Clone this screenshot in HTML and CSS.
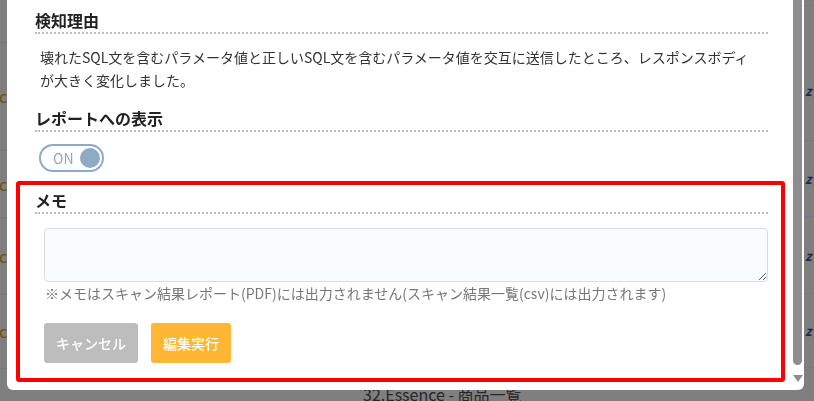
FILE: index.html
```html
<!DOCTYPE html>
<html lang="ja">
<head>
    <meta charset="UTF-8">
    <title>検知結果の編集</title>
    <link rel="stylesheet" href="styles.css">
</head>
<body>
<div id="page">
    <div class="page-left">
        <div class="row first"></div>
        <div class="row tall"><span>Spec</span></div>
        <div class="row mid"><span>Spec</span></div>
        <div class="row wide"><span>Spec</span></div>
        <div class="row short"><span>Spec</span></div>
    </div>
    <div class="page-main">
        <div class="caption">32.Essence - 商品一覧</div>
    </div>
    <div class="page-right">
        <div class="row first"></div>
        <div class="row tall"><span class="z">z</span><span class="b">)</span></div>
        <div class="row mid"><span class="z">z</span><span class="b">)</span></div>
        <div class="row wide"><span class="z">z</span><span class="b">)</span></div>
        <div class="row short"><span class="z">z</span><span class="b">)</span></div>
    </div>
</div>

<div id="modal">
    <div class="modal-body">
        <div class="section-title">検知理由</div>
        <p class="reason">壊れたSQL文を含むパラメータ値と正しいSQL文を含むパラメータ値を交互に送信したところ、レスポンスボディが大きく変化しました。</p>

        <div class="section-title second">レポートへの表示</div>
        <div class="toggle"><span class="toggle-label">ON</span><span class="toggle-knob"></span></div>

        <div class="memo">
            <div class="section-title">メモ</div>
            <div class="memo-field">
                <textarea></textarea>
                <div class="note">※メモはスキャン結果レポート(PDF)には出力されません(スキャン結果一覧(csv)には出力されます)</div>
            </div>
            <div class="actions">
                <button class="btn cancel">キャンセル</button>
                <button class="btn submit">編集実行</button>
            </div>
        </div>
    </div>
    <div class="scrollbar">
        <div class="thumb"></div>
        <div class="arrow"></div>
    </div>
</div>
</body>
</html>
```

FILE: styles.css
```css
body {
    margin: 0;
    background-color: #7f7f7f;
    font-family: "Noto Sans CJK JP", "Noto Sans", sans-serif;
    overflow: hidden;
}
#page {
    display: flex;
    height: 401px;
}
.page-left {
    width: 7px;
    overflow: hidden;
}
.page-right {
    width: 10px;
    overflow: hidden;
}
.page-main {
    flex: 1;
    padding: 382px 0 0 356px;
}
.caption {
    font-size: 16px;
    line-height: 24px;
    color: #262626;
    white-space: nowrap;
}
.row {
    display: flex;
    align-items: center;
    border-bottom: 1px solid #717886;
    white-space: nowrap;
    font-size: 15px;
}
.page-left .row {
    justify-content: flex-end;
    color: #6e4c10;
}
.page-left .first { height: 42px; }
.page-left .tall { height: 107px; }
.page-left .mid { height: 66px; }
.page-left .wide { height: 76px; }
.page-left .short { height: 73px; }
.page-right .first { height: 5px; }
.page-right .tall { height: 135px; align-items: flex-start; padding-top: 75px; box-sizing: border-box; }
.page-right .mid { height: 75px; }
.page-right .wide { height: 76px; }
.page-right .short { height: 73px; }
.page-right .z {
    color: #1c2a48;
    font-style: italic;
    font-weight: bold;
    font-size: 13px;
    margin-left: 1px;
}
.page-right .b {
    color: #7a5a20;
    font-size: 13px;
    margin-left: 1px;
}

#modal {
    position: fixed;
    left: 7px;
    top: -10px;
    width: 797px;
    height: 400px;
    background-color: #fff;
    border-radius: 6px;
    display: flex;
    overflow: hidden;
}
.modal-body {
    flex: 1;
    padding: 19px 25px 0 28px;
    color: #333;
}
.section-title {
    font-size: 16px;
    font-weight: bold;
    line-height: 23px;
    color: #222;
    border-bottom: 2px dotted #bcbcbc;
}
.section-title.second {
    margin-top: 15px;
}
.reason {
    margin: 12px 0 0;
    padding: 0 14px 0 5px;
    font-size: 14px;
    line-height: 23px;
}
.toggle {
    margin: 12px 0 0 4px;
    width: 65px;
    height: 28px;
    box-sizing: border-box;
    border: 2px solid #8eaac6;
    border-radius: 14px;
    display: flex;
    align-items: center;
    padding: 0 2px 0 12px;
}
.toggle-label {
    font-size: 14px;
    color: #8eaac8;
}
.toggle-knob {
    margin-left: auto;
    width: 20px;
    height: 20px;
    border-radius: 50%;
    background-color: #8eaac6;
}
.memo {
    margin: 9px -17px 0 -19px;
    border: 4px solid #ff0000;
    border-radius: 3px;
    padding: 4px 13px 15px 15px;
}
.memo-field {
    padding-left: 9px;
    margin-top: 14px;
}
.memo-field textarea {
    display: block;
    width: 100%;
    height: 54px;
    box-sizing: border-box;
    border: 1px solid #dcdcdc;
    border-radius: 4px;
    background-color: #fafbfd;
    margin: 0;
}
.note {
    margin-top: 1px;
    padding-left: 1px;
    font-size: 14px;
    line-height: 20px;
    color: #777;
}
.actions {
    display: flex;
    gap: 13px;
    margin: 20px 0 0 9px;
}
.btn {
    height: 40px;
    padding: 0 12px;
    border: none;
    border-radius: 3px;
    color: #fff;
    font-family: "Noto Sans CJK JP", sans-serif;
    font-size: 14px;
    font-weight: 500;
}
.btn.cancel {
    background-color: #bdbdbd;
}
.btn.submit {
    background-color: #ffb733;
}
.scrollbar {
    width: 9px;
    margin-right: 2px;
    padding-bottom: 8px;
    display: flex;
    flex-direction: column;
    align-items: center;
}
.thumb {
    flex: 1;
    width: 9px;
    background-color: #8e8e8e;
    border-radius: 0 0 5px 5px;
}
.arrow {
    margin-top: 10px;
    width: 0;
    height: 0;
    border-left: 5px solid transparent;
    border-right: 5px solid transparent;
    border-top: 7px solid #8e8e8e;
}
```
